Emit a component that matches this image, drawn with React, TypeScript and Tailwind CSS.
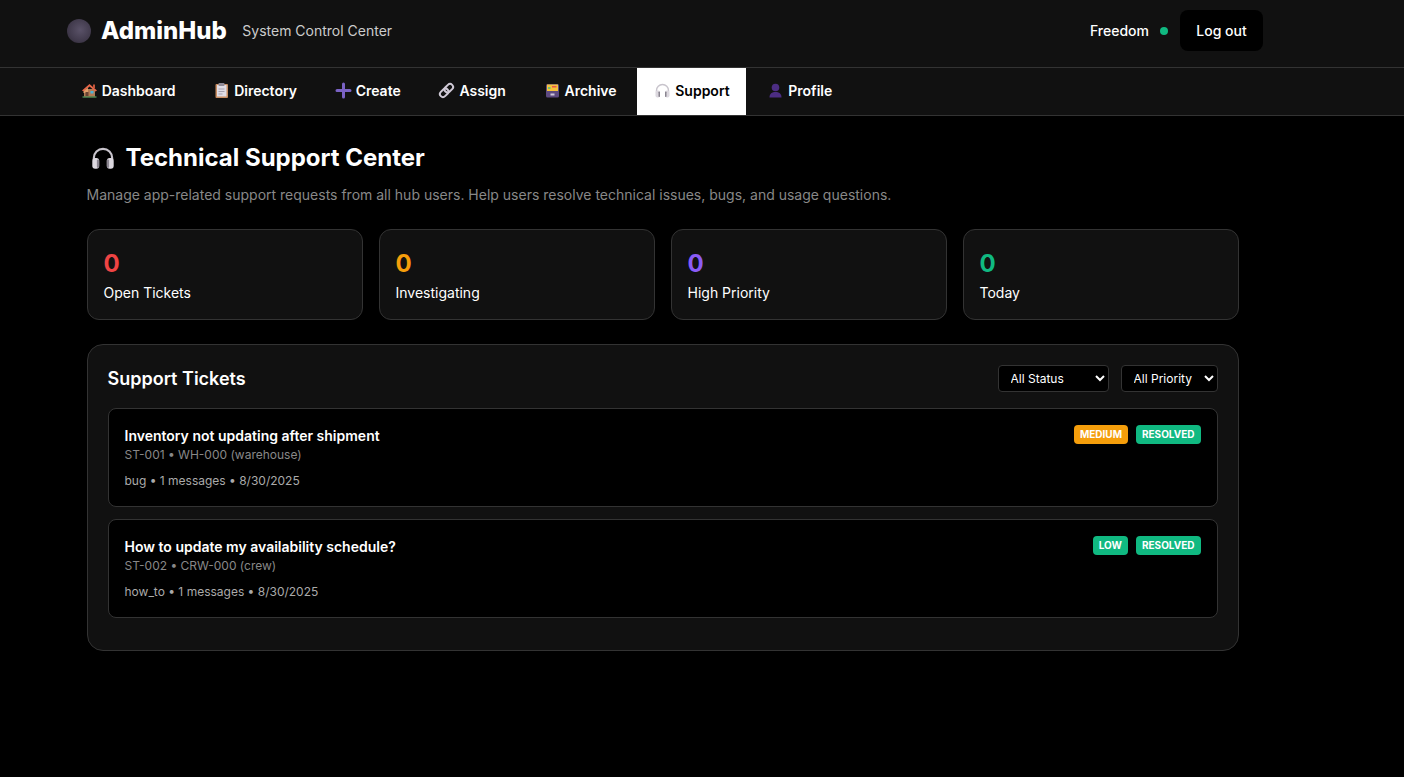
type Ticket = {
  title: string
  ref: string
  meta: string
  priority: string
  priorityClass: string
}

const tickets: Ticket[] = [
  {
    title: "Inventory not updating after shipment",
    ref: "ST-001 • WH-000 (warehouse)",
    meta: "bug • 1 messages • 8/30/2025",
    priority: "MEDIUM",
    priorityClass: "bg-[#f59e0b]",
  },
  {
    title: "How to update my availability schedule?",
    ref: "ST-002 • CRW-000 (crew)",
    meta: "how_to • 1 messages • 8/30/2025",
    priority: "LOW",
    priorityClass: "bg-[#10b981]",
  },
]

const stats = [
  { label: "Open Tickets", color: "text-[#ef4444]" },
  { label: "Investigating", color: "text-[#f59e0b]" },
  { label: "High Priority", color: "text-[#8b5cf6]" },
  { label: "Today", color: "text-[#10b981]" },
]

function HouseIcon() {
  return (
    <svg width="17" height="17" viewBox="0 0 17 17">
      <rect x="3" y="7" width="11" height="7.5" fill="#b27c56" />
      <path d="M1 8.5 8.5 2 16 8.5 14.5 9.5 8.5 4.5 2.5 9.5Z" fill="#e8674a" />
      <path d="M8.5 4.5 2.5 9.5V11H7V6Z" fill="#e0a06a" />
      <rect x="12" y="2.5" width="2" height="3.5" fill="#c4553a" />
      <rect x="4.5" y="10" width="3" height="4.5" fill="#6b4433" />
      <rect x="9.5" y="9" width="3" height="2.5" fill="#4db3d9" />
      <rect x="1.5" y="14.5" width="14" height="1" fill="#6fbf73" />
    </svg>
  )
}

function ClipboardIcon() {
  return (
    <svg width="17" height="17" viewBox="0 0 17 17">
      <rect x="2.5" y="2" width="12.5" height="14" rx="1" fill="#c98e63" />
      <rect x="4" y="3" width="9.5" height="11.5" fill="#e0dde6" />
      <rect x="5.5" y="1" width="6" height="3" rx="0.8" fill="#8f8a96" />
      <path d="M5.5 7h6M5.5 9.5h6M5.5 12h4" stroke="#a6a2b0" strokeWidth="1" />
    </svg>
  )
}

function PlusIcon() {
  return (
    <svg width="17" height="17" viewBox="0 0 17 17">
      <path d="M8.5 2v13M2 8.5h13" stroke="#7a62c4" strokeWidth="3" strokeLinecap="round" />
    </svg>
  )
}

function LinkIcon() {
  return (
    <svg width="17" height="17" viewBox="0 0 17 17" fill="none">
      <g transform="rotate(-45 8.5 8.5)" stroke="#cfc9d6" strokeWidth="2">
        <rect x="0.5" y="5.5" width="9.5" height="6" rx="3" />
        <rect x="7" y="5.5" width="9.5" height="6" rx="3" />
      </g>
    </svg>
  )
}

function ArchiveIcon() {
  return (
    <svg width="17" height="17" viewBox="0 0 17 17">
      <rect x="2" y="2" width="13" height="13.5" rx="1.5" fill="#5d4a80" />
      <rect x="3" y="2.5" width="11" height="6.5" fill="#f5c33b" />
      <rect x="8" y="4" width="4.5" height="1.5" fill="#e8594a" />
      <rect x="4" y="5" width="2.5" height="2" fill="#6fbf73" />
      <rect x="6.5" y="11.5" width="4" height="2" fill="#cfc8dc" />
    </svg>
  )
}

function HeadphonesIcon({ size = 17 }: { size?: number }) {
  return (
    <svg width={size} height={size} viewBox="0 0 17 17" fill="none">
      <path d="M2.5 10V8.5a6 6 0 0 1 12 0V10" stroke="#c8c4cc" strokeWidth="1.4" />
      <rect x="1.5" y="8.5" width="4.5" height="7" rx="1.9" fill="#dcd8df" />
      <rect x="11" y="8.5" width="4.5" height="7" rx="1.9" fill="#dcd8df" />
      <rect x="4.5" y="9.5" width="1.5" height="5.5" rx="0.7" fill="#8a8590" />
      <rect x="11" y="9.5" width="1.5" height="5.5" rx="0.7" fill="#8a8590" />
    </svg>
  )
}

function PersonIcon() {
  return (
    <svg width="17" height="17" viewBox="0 0 17 17">
      <circle cx="8.5" cy="5.5" r="3.8" fill="#4c2d83" />
      <path d="M2.5 15.5c0-4 2.5-5.5 6-5.5s6 1.5 6 5.5Z" fill="#4c2d83" />
    </svg>
  )
}

const navItems = [
  { label: "Dashboard", icon: <HouseIcon /> },
  { label: "Directory", icon: <ClipboardIcon /> },
  { label: "Create", icon: <PlusIcon /> },
  { label: "Assign", icon: <LinkIcon /> },
  { label: "Archive", icon: <ArchiveIcon /> },
  { label: "Support", icon: <HeadphonesIcon />, active: true },
  { label: "Profile", icon: <PersonIcon /> },
]

function Badge({ text, className }: { text: string; className: string }) {
  return (
    <span className={`flex h-[19px] items-center rounded-[4px] px-[6px] text-[10px] font-bold text-white ${className}`}>
      {text}
    </span>
  )
}

export default function App() {
  return (
    <div className="min-h-[777px] bg-black font-['Inter',sans-serif] text-white">
      <header className="border-b border-[#333] bg-[#111]">
        <div className="flex h-[67px] items-center justify-between pb-[6px] pl-[67px] pr-[141px]">
          <div className="flex items-center">
            <div className="h-6 w-6 rounded-full bg-[radial-gradient(circle_at_55%_45%,#5a5268,#413a4c_60%,#2b2631)]" />
            <span className="ml-[10px] text-2xl font-extrabold">AdminHub</span>
            <span className="ml-[15.5px] text-sm text-[#ccc]">System Control Center</span>
          </div>
          <div className="flex items-center">
            <span className="text-sm font-medium">Freedom</span>
            <span className="ml-[11px] h-2 w-2 rounded-full bg-[#10b981]" />
            <button className="ml-3 h-[41px] w-[83px] rounded-lg bg-black text-sm font-medium text-white">Log out</button>
          </div>
        </div>
      </header>

      <nav className="border-b border-[#333] bg-[#111]">
        <div className="flex h-[47px] gap-1 pl-[63px]">
          {navItems.map((item) => (
            <div
              key={item.label}
              className={`flex items-center gap-1 px-4 pb-[2px] text-sm font-semibold ${item.active ? "bg-white text-black" : "text-white"}`}
            >
              <span className="flex w-[18.67px] justify-end">{item.icon}</span>
              <span>{item.label}</span>
            </div>
          ))}
        </div>
      </nav>

      <main className="ml-[86.5px] w-[1152px] pt-6">
        <h1 className="flex h-[36px] items-center text-2xl font-bold">
          <span className="ml-[3px] mr-[10px]">
            <HeadphonesIcon size={26} />
          </span>
          Technical Support Center
        </h1>
        <p className="mt-[9px] text-sm text-[#888]">
          Manage app-related support requests from all hub users. Help users resolve technical issues, bugs, and usage questions.
        </p>

        <div className="mt-6 grid grid-cols-4 gap-4">
          {stats.map((stat) => (
            <div key={stat.label} className="h-[91px] rounded-xl border border-[#333] bg-[#111] px-4 pt-[18px]">
              <div className={`text-2xl font-bold ${stat.color}`}>0</div>
              <div className="mt-[3px] text-sm">{stat.label}</div>
            </div>
          ))}
        </div>

        <section className="mt-6 h-[307px] rounded-2xl border border-[#333] bg-[#111] px-5 pt-5">
          <div className="flex h-[27px] items-center justify-between">
            <h2 className="text-lg font-semibold">Support Tickets</h2>
            <div className="flex gap-3">
              <select className="h-[27px] w-[111px] rounded border border-[#333] bg-black pl-2 text-xs text-white">
                <option>All Status</option>
              </select>
              <select className="h-[27px] w-[97px] rounded border border-[#333] bg-black pl-2 text-xs text-white">
                <option>All Priority</option>
              </select>
            </div>
          </div>

          <div className="mt-4 flex flex-col gap-3">
            {tickets.map((ticket) => (
              <div key={ticket.ref} className="flex h-[99px] justify-between rounded-lg border border-[#333] bg-black p-4">
                <div className="pt-[1px]">
                  <div className="text-sm font-semibold">{ticket.title}</div>
                  <div className="mt-[1px] text-xs text-[#888]">{ticket.ref}</div>
                  <div className="mt-[10px] text-xs text-[#aaa]">{ticket.meta}</div>
                </div>
                <div className="flex gap-2">
                  <Badge text={ticket.priority} className={ticket.priorityClass} />
                  <Badge text="RESOLVED" className="bg-[#10b981]" />
                </div>
              </div>
            ))}
          </div>
        </section>
      </main>
    </div>
  )
}
